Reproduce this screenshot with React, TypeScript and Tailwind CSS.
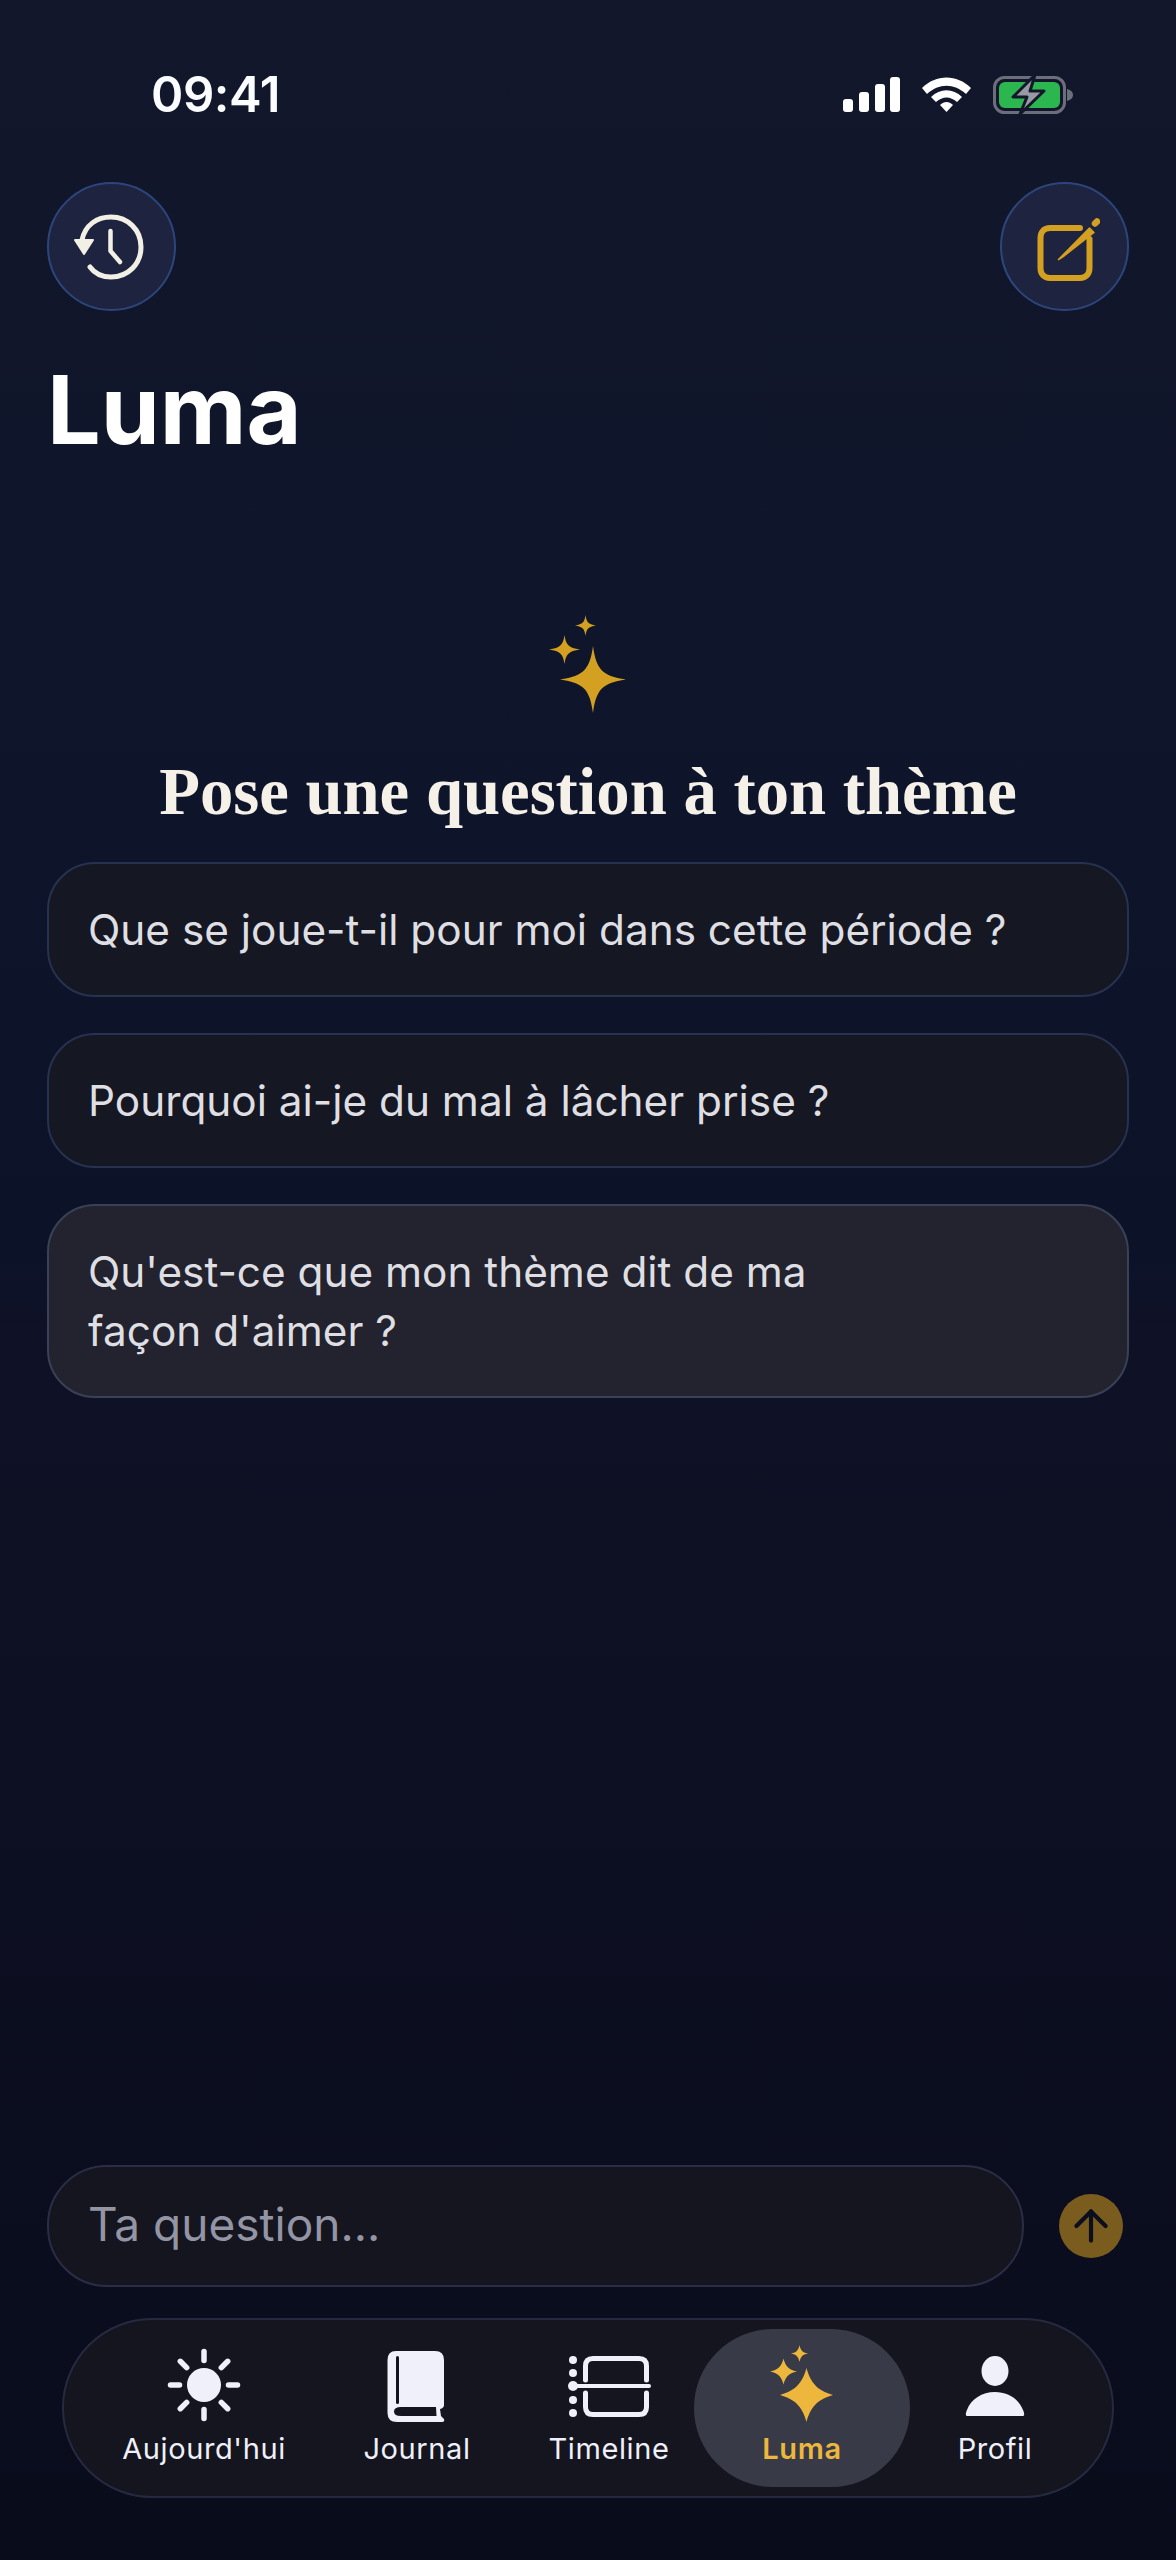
import { ArrowUp } from "lucide-react"

const prompts = [
  { text: "Que se joue-t-il pour moi dans cette période ?", active: false },
  { text: "Pourquoi ai-je du mal à lâcher prise ?", active: false },
  { text: "Qu'est-ce que mon thème dit de ma façon d'aimer ?", active: true },
]

// four point star, w/h are half sizes
function star(cx: number, cy: number, w: number, h: number, k = 0.14) {
  const a = w * k
  const b = h * k
  return `M${cx} ${cy - h}C${cx + a * 0.6} ${cy - b * 2} ${cx + a * 1.6} ${cy - b * 0.7} ${cx + w} ${cy}C${cx + a * 1.6} ${cy + b * 0.7} ${cx + a * 0.6} ${cy + b * 2} ${cx} ${cy + h}C${cx - a * 0.6} ${cy + b * 2} ${cx - a * 1.6} ${cy + b * 0.7} ${cx - w} ${cy}C${cx - a * 1.6} ${cy - b * 0.7} ${cx - a * 0.6} ${cy - b * 2} ${cx} ${cy - h}Z`
}

function StatusIcons() {
  return (
    <svg width="232" height="40" viewBox="0 0 232 40" className="shrink-0">
      <rect x="2" y="24" width="10" height="13" rx="3" fill="#fff" />
      <rect x="18" y="17" width="10" height="20" rx="3" fill="#fff" />
      <rect x="34" y="9" width="10" height="28" rx="3" fill="#fff" />
      <rect x="49" y="2" width="10" height="35" rx="3" fill="#fff" />
      <path d="M81 13C95 -1 116 -1 130 13L125 19C113 8 98 8 86 19Z" fill="#fff" />
      <path d="M90 22C99 13 112 13 121 22L116 27C109 21 102 21 95 27Z" fill="#fff" />
      <path d="M99 30C103 26 108 26 112 30L105.500 37Z" fill="#fff" />
      <rect x="153.500" y="2.500" width="70" height="35" rx="10" fill="none" stroke="#6c6f7b" strokeWidth="3" />
      <rect x="158" y="7" width="61" height="26" rx="6" fill="#2bb650" />
      <path d="M226 14C230 15 232 17 232 20C232 23 230 25 226 26Z" fill="#6c6f7b" />
      <path d="M194 0L172 22H186L179 39L203 16H189Z" fill="#9799a4" stroke="#12172a" strokeWidth="3" strokeLinejoin="round" />
    </svg>
  )
}

function HistoryIcon() {
  return (
    <svg width="76" height="70" viewBox="0 0 76 70" fill="none">
      <path d="M8 28C11 13 23 5 37 5C54 5 67 18 67 35C67 52 54 65 37 65C28 65 21 62 16 55" stroke="#f2efe4" strokeWidth="5" strokeLinecap="round" />
      <path d="M1 28H19L10 42Z" fill="#f2efe4" stroke="#f2efe4" strokeWidth="2" strokeLinejoin="round" />
      <path d="M36.500 19V39L46 50" stroke="#f2efe4" strokeWidth="4.500" strokeLinecap="round" strokeLinejoin="round" />
    </svg>
  )
}

function EditIcon() {
  return (
    <svg width="70" height="70" viewBox="0 0 70 70" fill="none">
      <path d="M50 16H20C14 16 10.500 20 10.500 26V56C10.500 62 14 66 20 66H50C56 66 59.500 62 59.500 56V27" stroke="#d4a021" strokeWidth="6" strokeLinecap="round" />
      <path d="M28.500 47.500L59.500 16L64 20.500L34 44Z" fill="#d4a021" stroke="#d4a021" strokeWidth="1.500" strokeLinejoin="round" />
      <path d="M65 11.500L67 9.500" stroke="#d4a021" strokeWidth="6.500" strokeLinecap="round" />
    </svg>
  )
}

function Sun() {
  const rays = [0, 45, 90, 135, 180, 225, 270, 315]
  return (
    <svg width="84" height="80" viewBox="0 0 84 80">
      <circle cx="42" cy="40" r="17" fill="#f0f0fb" />
      {rays.map(r => (
        <line key={r} x1="42" y1="15.500" x2="42" y2="6.500" stroke="#f0f0fb" strokeWidth="5.500" strokeLinecap="round" transform={`rotate(${r} 42 40)`} />
      ))}
    </svg>
  )
}

function Book() {
  return (
    <svg width="84" height="80" viewBox="0 0 84 80">
      <path d="M21 6H60Q69 6 69 15V60Q69 63 65 64L66 71L69 74Q70 77 67 77H22Q12.500 77 12.500 68V15Q12.500 6 21 6Z" fill="#f0f0fb" />
      <path d="M26 62H61L61.500 71H26Q19 71 19 66.500Q19 62 26 62Z" fill="#12131f" />
      <rect x="21" y="11" width="3" height="48" rx="1.500" fill="#12131f" />
    </svg>
  )
}

function Timeline() {
  return (
    <svg width="84" height="80" viewBox="0 0 84 80" fill="none">
      <path d="M18.500 35V21Q18.500 13.500 26 13.500H72Q79.500 13.500 79.500 21V35" stroke="#f0f0fb" strokeWidth="5" strokeLinecap="round" />
      <path d="M18.500 48V62Q18.500 69.500 26 69.500H72Q79.500 69.500 79.500 62V48" stroke="#f0f0fb" strokeWidth="5" strokeLinecap="round" />
      <path d="M6 41H82" stroke="#f0f0fb" strokeWidth="4" strokeLinecap="round" />
      <circle cx="6" cy="15" r="4" fill="#f0f0fb" />
      <circle cx="6" cy="28" r="4" fill="#f0f0fb" />
      <circle cx="6" cy="41" r="5" fill="#f0f0fb" />
      <circle cx="6" cy="55" r="4" fill="#f0f0fb" />
      <circle cx="6" cy="68" r="4" fill="#f0f0fb" />
    </svg>
  )
}

function Sparkles() {
  return (
    <svg width="84" height="80" viewBox="0 0 84 80" fill="#ecb73c">
      <path d={star(46.500, 50, 26.500, 27, 0.24)} />
      <path d={star(23.500, 26.500, 13.500, 13, 0.22)} />
      <path d={star(39.500, 8.500, 8.500, 8.500, 0.2)} />
    </svg>
  )
}

function Person() {
  return (
    <svg width="84" height="80" viewBox="0 0 84 80" fill="#f0f0fb">
      <ellipse cx="42" cy="26" rx="13.500" ry="15" />
      <path d="M14 71C12 71 13 67 14 65C18 54 29 47 42 47C55 47 66 54 70 65C71 67 72 71 70 71Z" />
    </svg>
  )
}

const tabs = [
  { label: "Aujourd'hui", icon: <Sun />, width: "w-[212px]" },
  { label: "Journal", icon: <Book />, width: "w-[214px]" },
  { label: "Timeline", icon: <Timeline />, width: "w-[170px]" },
  { label: "Luma", icon: <Sparkles />, width: "w-[216px]", active: true },
  { label: "Profil", icon: <Person />, width: "w-[170px]" },
]

export default function App() {
  return (
    <div className="flex h-[2560px] w-[1176px] flex-col bg-[linear-gradient(to_bottom,#12172b_0%,#0c1329_49%,#0f1126_52%,#090c1b_100%)] font-['Inter',sans-serif] text-white">
      <div className="flex items-center justify-between pl-[151px] pr-[103px] pt-[68px]">
        <span className="text-[49px] leading-[54px] font-semibold tracking-[-0.4px] text-[#fbfcff]">09:41</span>
        <StatusIcons />
      </div>

      <div className="mt-[60px] flex justify-between px-[47px]">
        <button className="flex size-[129px] items-center justify-center rounded-full border-2 border-[#2c467c] bg-[#1e2340]">
          <HistoryIcon />
        </button>
        <button className="flex size-[129px] items-center justify-center rounded-full border-2 border-[#2c467c] bg-[#1e2340]">
          <EditIcon />
        </button>
      </div>

      <h1 className="mt-[41px] px-[47px] text-[95px] leading-[116px] font-bold">Luma</h1>

      <div className="mt-[147px] flex flex-col items-center px-[47px]">
        <svg width="80" height="100" viewBox="0 0 80 100" fill="#d4a021">
          <path d={star(45, 64.500, 33, 33.500, 0.16)} />
          <path d={star(16.500, 34.500, 15.500, 14.500, 0.16)} />
          <path d={star(37.500, 10.500, 10.500, 10.500, 0.16)} />
        </svg>
        <h2 className="mt-[38px] font-['Liberation_Serif',serif] text-[66.700px] leading-[78px] font-bold text-[#f5f1e8]">
          Pose une question à ton thème
        </h2>

        <div className="mt-[31px] flex w-full flex-col gap-[36px]">
          {prompts.map(p => (
            <button
              key={p.text}
              className={
                p.active
                  ? "rounded-[48px] border-2 border-[#3a4157] bg-[#22232e] py-[36px] pl-[39px] pr-[280px] text-left text-[42.300px] leading-[59px] text-[#dfdfe3]"
                  : "rounded-[48px] border-2 border-[#273150] bg-[#151823] py-[36px] pl-[39px] pr-[40px] text-left text-[42.300px] leading-[59px] text-[#dfdfe3]"
              }
            >
              {p.text}
            </button>
          ))}
        </div>
      </div>

      <div className="mt-auto flex items-center justify-between pl-[47px] pr-[53px]">
        <input
          readOnly
          placeholder="Ta question..."
          className="h-[122px] w-[977px] rounded-[60px] border-2 border-[#2a2d45] bg-[#14151f] pb-[4px] pl-[39px] text-[46px] outline-none placeholder:text-[#9394a4]"
        />
        <div className="flex size-[64px] items-center justify-center rounded-full bg-[#7a5c1e]">
          <ArrowUp size={50} strokeWidth={2} color="#0b0e1c" />
        </div>
      </div>

      <nav className="mx-[62px] mt-[31px] mb-[62px] flex h-[180px] items-center rounded-[90px] border-2 border-[#262a40] bg-[#14151f] pl-[34px]">
        {tabs.map(t => (
          <div
            key={t.label}
            className={`flex h-[158px] flex-col items-center pt-[16px] ${t.width} ${t.active ? "rounded-[79px] bg-[#383a47]" : ""}`}
          >
            {t.icon}
            <span className={`mt-[6px] text-[29px] leading-[36px] tracking-[0.6px] ${t.active ? "font-semibold text-[#ecb73c]" : "font-normal text-[#f0f0fb]"}`}>
              {t.label}
            </span>
          </div>
        ))}
      </nav>
    </div>
  )
}
